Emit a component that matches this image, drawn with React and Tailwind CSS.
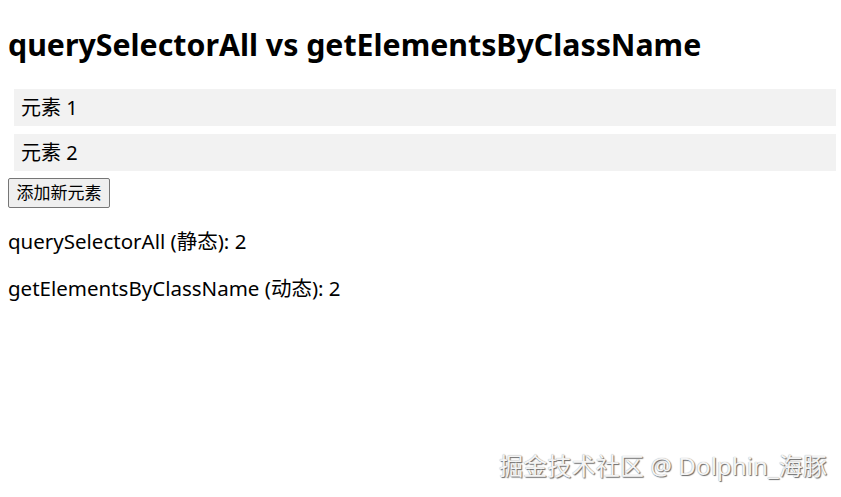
import React from "react";

const font = { fontFamily: '"Noto Sans", "Noto Sans CJK SC", sans-serif' };

export default function App() {
  const items = ["元素 1", "元素 2"];
  return (
    <div className="relative h-[497px] w-[841px] overflow-hidden bg-white text-black" style={font}>
      <div className="px-2 pt-[23px]">
        <h1 className="text-[30.3px] font-bold leading-[44px]">querySelectorAll vs getElementsByClassName</h1>
        <div className="mt-[22px] ml-[6px] mr-[-3px] flex flex-col gap-[8px]">
          {items.map((t) => (
            <div key={t} className="h-[37px] bg-[#f2f2f2] pl-[7px] text-[20px] leading-[37px]">
              {t}
            </div>
          ))}
        </div>
        <button className="mt-[7px] h-[30px] w-[102px] rounded-[2px] border border-[#767676] bg-[#efefef] text-[17px] leading-[28px]">
          添加新元素
        </button>
        <p className="mt-[18px] text-[20.5px] leading-[30px]">querySelectorAll (静态): 2</p>
        <p className="mt-[17px] text-[20.5px] leading-[30px]">getElementsByClassName (动态): 2</p>
      </div>
      <div
        className="absolute bottom-[17px] right-[14px] text-[24.2px] leading-[28px] text-[#f4f4f4]"
        style={{ textShadow: "1px 1px 1px #6b6b6b, 0 0 1px #9a9a9a" }}
      >
        掘金技术社区 @ Dolphin_海豚
      </div>
    </div>
  );
}
